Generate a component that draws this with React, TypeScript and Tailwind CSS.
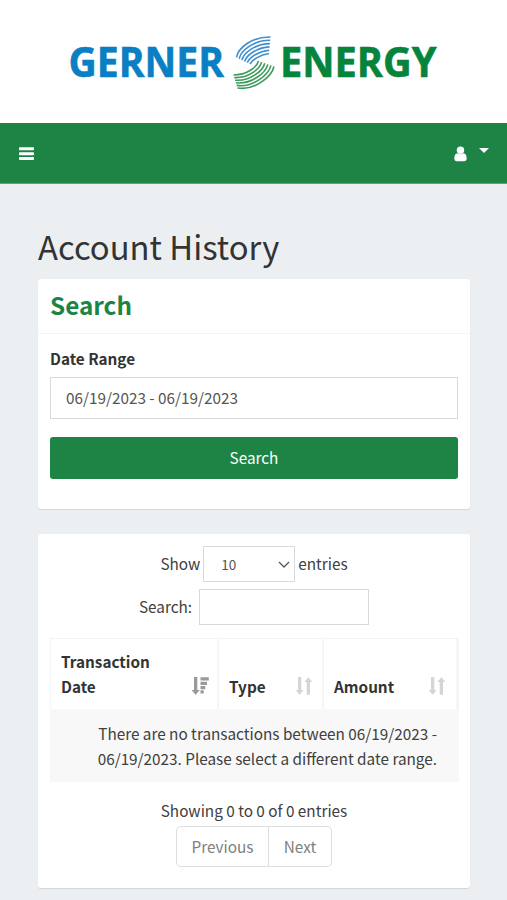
import React from "react";

function SwirlMark() {
  const steps = [0, 1, 2, 3, 4, 5];
  return (
    <g fill="none" strokeLinecap="butt">
      {steps.map((i) => (
        <path
          key={"b" + i}
          stroke="#3f8fce"
          strokeWidth={1.6}
          d={`M${236.5 + i * 2.7} ${57.5 + i * 1.3}C${238 + i * 2.9} ${48 + i * 2.3} ${252 + i * 1.6} ${36.5 + i * 3.7} ${270.5 - i * 0.3} ${37 + i * 3.3}`}
        />
      ))}
      {steps.map((i) => (
        <path
          key={"g" + i}
          stroke="#3c9a5b"
          strokeWidth={1.6}
          d={`M${274 - i * 3.1} ${66.5 - i * 1.1}C${272 - i * 3} ${76 - i * 1.8} ${255 - i * 1.6} ${91 - i * 3.2} ${237.5 - i * 0.8} ${88 - i * 2.6}`}
        />
      ))}
    </g>
  );
}

function Logo() {
  return (
    <svg width="507" height="123" viewBox="0 0 507 123" className="block font-['Open_Sans',sans-serif] font-bold">
      <text x="68.500" y="77" fontSize="40.5" fill="#0a7fc4" stroke="#0a7fc4" strokeWidth="0.6" textLength="155.5" lengthAdjust="spacingAndGlyphs">
        GERNER
      </text>
      <SwirlMark />
      <text x="280" y="77" fontSize="40.5" fill="#07843c" stroke="#07843c" strokeWidth="0.6" textLength="156.5" lengthAdjust="spacingAndGlyphs">
        ENERGY
      </text>
    </svg>
  );
}

function SortBoth() {
  return (
    <svg width="18" height="18" viewBox="0 0 18 18" fill="#d5d5d5" className="shrink-0">
      <path d="M3 0h3.300v13h2.400L4.650 17.800.5 13H3zM11.700 17.800H15V5h2.500L13.350.2 9.300 5h2.400z" />
    </svg>
  );
}

function SortDesc() {
  return (
    <svg width="18" height="18" viewBox="0 0 18 18" fill="#999" className="shrink-0">
      <path d="M3 0h3.300v13h2.400L4.650 17.800.5 13H3zM9.500.3H17.800V3.600H9.500zM9.500 4.700h6.500v3.200H9.500zM9.500 9h4.800v3.200h-4.800zM9.500 13.300h3.200v3.200h-3.200z" />
    </svg>
  );
}

export default function App() {
  return (
    <div className="h-[900px] w-[507px] overflow-hidden bg-[#ebeff2] font-['Noto_Sans_CJK_SC',sans-serif] text-[15.300px] leading-[24.500px] text-[#404040]">
      <header className="h-[123px] bg-white">
        <Logo />
      </header>
      <nav className="flex h-[61px] items-start justify-between border-b border-[#5ba47c] bg-[#1d8446] pl-[19px] pr-[18px]">
        <svg width="15" height="14" viewBox="0 0 15 14" fill="#fff" className="mt-[24px]">
          <rect width="15" height="3" y="0.300" rx="0.800" />
          <rect width="15" height="3" y="5.200" rx="0.800" />
          <rect width="15" height="3" y="10.100" rx="0.800" />
        </svg>
        <div className="flex items-start gap-[12px]">
          <svg width="13" height="16" viewBox="0 0 13 16" fill="#fff" className="mt-[23px]">
            <path d="M3.500 7.200C1.300 7.200.3 9.500.3 12.600c0 1.600 1 2.600 2.400 2.600h7.600c1.400 0 2.400-1 2.400-2.600 0-3.100-1-5.400-3.200-5.400-.8.700-1.800 1.100-3 1.100s-2.200-.4-3-1.100z" />
            <circle cx="6.500" cy="4.200" r="3.700" />
          </svg>
          <svg width="10" height="5" viewBox="0 0 10 5" fill="#fff" className="mt-[25px]">
            <path d="M0 0h10L5 5z" />
          </svg>
        </div>
      </nav>

      <main className="pl-[38px] pr-[37px] pt-[38px]">
        <h1 className="h-[57px] whitespace-nowrap text-[32.800px] leading-[48px] text-[#333]">Account History</h1>

        <section className="h-[230px] rounded-[3px] bg-white shadow-[0_1px_1px_rgba(0,0,0,0.1)]">
          <h2 className="h-[55px] border-b border-[#f4f4f4] px-3 text-[24.300px] font-bold leading-[51px] text-[#1d8446]">Search</h2>
          <div className="px-3 pt-[12px]">
            <label className="block h-[31px] font-bold text-[#333]">Date Range</label>
            <div className="flex h-[42px] items-center border border-[#d8d9dc] px-[15px] pb-[2px] text-[#555]">06/19/2023 - 06/19/2023</div>
            <button className="mt-[18px] flex h-[42px] w-full items-center justify-center rounded-[3px] bg-[#1d8446] pb-[2px] text-white">Search</button>
          </div>
        </section>

        <section className="mt-[25px] h-[354px] rounded-[3px] bg-white px-3 pt-3 shadow-[0_1px_1px_rgba(0,0,0,0.1)]">
          <div className="flex h-9 items-center justify-center gap-[3px]">
            <span className="pb-[2px]">Show</span>
            <span className="flex h-9 w-[92px] items-center justify-between border border-[#d8d9dc] pl-[17px] pr-[4px] text-[13.500px] text-[#555]">
              10
              <svg width="12" height="7" viewBox="0 0 12 7" fill="none" stroke="#555" strokeWidth="1.300">
                <path d="M1 1l5 5 5-5" />
              </svg>
            </span>
            <span className="pb-[2px]">entries</span>
          </div>
          <div className="mt-[7px] flex h-9 items-center justify-center gap-[7px]">
            <span className="pb-[2px]">Search:</span>
            <span className="h-9 w-[170px] border border-[#d8d9dc]" />
          </div>

          <div className="mt-[13px] h-[144px] w-[409px] border-t border-[#f4f4f4]">
            <div className="flex h-[70px] items-end border-x border-[#f4f4f4] font-bold text-[#333]">
              <div className="flex h-full w-[168px] items-end justify-between border-r-2 border-[#f6f6f6] pb-[11px] pl-[10px] pr-[8px]">
                <span>
                  Transaction
                  <br />
                  Date
                </span>
                <span className="pb-[3px]"><SortDesc /></span>
              </div>
              <div className="flex h-full w-[105px] items-end justify-between border-r-2 border-[#f6f6f6] pb-[11px] pl-[10px] pr-[9px]">
                <span>Type</span>
                <span className="pb-[3px]"><SortBoth /></span>
              </div>
              <div className="flex h-full flex-1 items-end justify-between border-r-2 border-[#f6f6f6] pb-[11px] pl-[10px] pr-[10px]">
                <span>Amount</span>
                <span className="pb-[3px]"><SortBoth /></span>
              </div>
            </div>
            <div className="h-[73px] whitespace-nowrap bg-[#f8f8f8] pr-[22px] pt-[12px] text-right">
              There are no transactions between 06/19/2023 -<br />
              06/19/2023. Please select a different date range.
            </div>
          </div>

          <div className="mt-[16px] h-[28px] text-center">Showing 0 to 0 of 0 entries</div>
          <div className="flex h-[41px] justify-center text-[#808080]">
            <span className="flex w-[93px] items-center justify-center rounded-l-[5px] border border-[#ddd]">Previous</span>
            <span className="flex w-[63px] items-center justify-center rounded-r-[5px] border border-l-0 border-[#ddd]">Next</span>
          </div>
        </section>
      </main>
    </div>
  );
}
